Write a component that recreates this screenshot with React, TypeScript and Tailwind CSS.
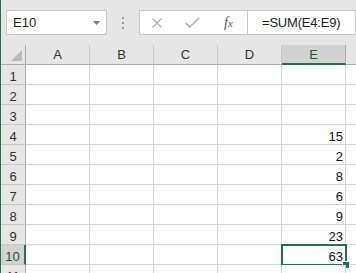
import React from 'react';

export default function App() {
  const cols = ['A', 'B', 'C', 'D', 'E'];
  const values: Record<number, string> = { 4: '15', 5: '2', 6: '8', 7: '6', 8: '9', 9: '23', 10: '63' };
  const rows = Array.from({ length: 11 }, (_, i) => i + 1);

  return (
    <div className="w-[356px] h-[273px] overflow-hidden bg-[#e6e6e6] border-l border-[#217346] font-['Liberation_Sans',Arial,sans-serif]">
      {/* Formula bar */}
      <div className="h-[45px] flex items-start pt-[10px] pl-[5px]">
        <div className="w-[101px] h-[25px] shrink-0 bg-white border border-[#c6c6c6] flex items-center pl-[6px] pr-[6px] text-[13px] text-[#222]">
          <span className="flex-1 leading-none">E10</span>
          <svg width="7" height="4" viewBox="0 0 7 4">
            <path d="M0 0H7L3.5 4Z" fill="#777" />
          </svg>
        </div>
        <div className="w-[32px] h-[25px] shrink-0 flex flex-col items-center justify-center gap-[3px]">
          <div className="w-[2px] h-[2px] bg-[#9a9a9a]" />
          <div className="w-[2px] h-[2px] bg-[#9a9a9a]" />
          <div className="w-[2px] h-[2px] bg-[#9a9a9a]" />
        </div>
        <div className="w-[109px] h-[25px] shrink-0 bg-white border border-[#c6c6c6] flex items-center pl-[12px]">
          <svg width="10" height="10" viewBox="0 0 10 10" className="shrink-0">
            <path d="M0.5 0.5L9.5 9.5M9.5 0.5L0.5 9.5" stroke="#b4b4b4" strokeWidth="1.3" fill="none" />
          </svg>
          <svg width="15" height="11" viewBox="0 0 15 11" className="shrink-0 ml-[23px]">
            <path d="M0.8 6.2L4.8 10L14.2 0.8" stroke="#b4b4b4" strokeWidth="1.6" fill="none" />
          </svg>
          <span className="ml-[24px] italic text-[14px] text-[#555] font-['Liberation_Serif',serif] leading-none">
            f<span className="text-[11px]">x</span>
          </span>
        </div>
        <div className="flex-1 h-[25px] bg-white border border-l-0 border-[#c6c6c6] flex items-center pl-[14px] text-[13px] text-[#222] tracking-[-0.2px] leading-none">
          =SUM(E4:E9)
        </div>
      </div>

      {/* Grid */}
      <div className="grid grid-cols-[25px_repeat(5,64px)_1fr] text-[13px]">
        {/* Header row */}
        <div className="h-[20px] border-r border-b border-[#ababab] bg-[#e6e6e6] flex items-end justify-end pr-[3px] pb-[3px]">
          <svg width="11" height="11" viewBox="0 0 11 11">
            <path d="M11 0V11H0Z" fill="#b9b9b9" />
          </svg>
        </div>
        {cols.map((c) => (
          <div
            key={c}
            className={
              c === 'E'
                ? 'h-[20px] border-r border-[#ababab] border-b-2 border-b-[#217346] bg-[#d2d2d2] text-[#1e5b38] flex items-center justify-center leading-[15px]'
                : 'h-[20px] border-r border-b border-r-[#c8c8c8] border-b-[#ababab] bg-[#e6e6e6] text-[#333] flex items-center justify-center leading-[15px]'
            }
          >
            {c}
          </div>
        ))}
        <div className="h-[20px] border-b border-[#ababab] bg-[#e6e6e6]" />

        {rows.map((r) => (
          <React.Fragment key={r}>
            <div
              className={
                r === 10
                  ? 'h-[20px] border-b border-b-[#c8c8c8] border-r-2 border-r-[#217346] bg-[#d2d2d2] text-[#1e5b38] flex items-end justify-center leading-[15px]'
                  : 'h-[20px] border-b border-r border-b-[#c8c8c8] border-r-[#ababab] bg-[#e6e6e6] text-[#333] flex items-end justify-center leading-[15px]'
              }
            >
              {r}
            </div>
            {cols.map((c) => (
              <div
                key={c}
                className="relative h-[20px] border-r border-b border-[#d4d4d4] bg-white flex items-end justify-end pr-[2px] leading-[15px] text-[#111]"
              >
                {c === 'E' ? values[r] ?? '' : ''}
                {c === 'E' && r === 10 && (
                  <div className="absolute left-[-1px] top-[-1px] w-[66px] h-[22px] border-2 border-[#217346]">
                    <div className="absolute right-[-4px] bottom-[-4px] w-[6px] h-[6px] bg-[#217346] outline outline-1 outline-white" />
                  </div>
                )}
              </div>
            ))}
            <div className="h-[20px] border-b border-[#d4d4d4] bg-white" />
          </React.Fragment>
        ))}
      </div>
    </div>
  );
}
